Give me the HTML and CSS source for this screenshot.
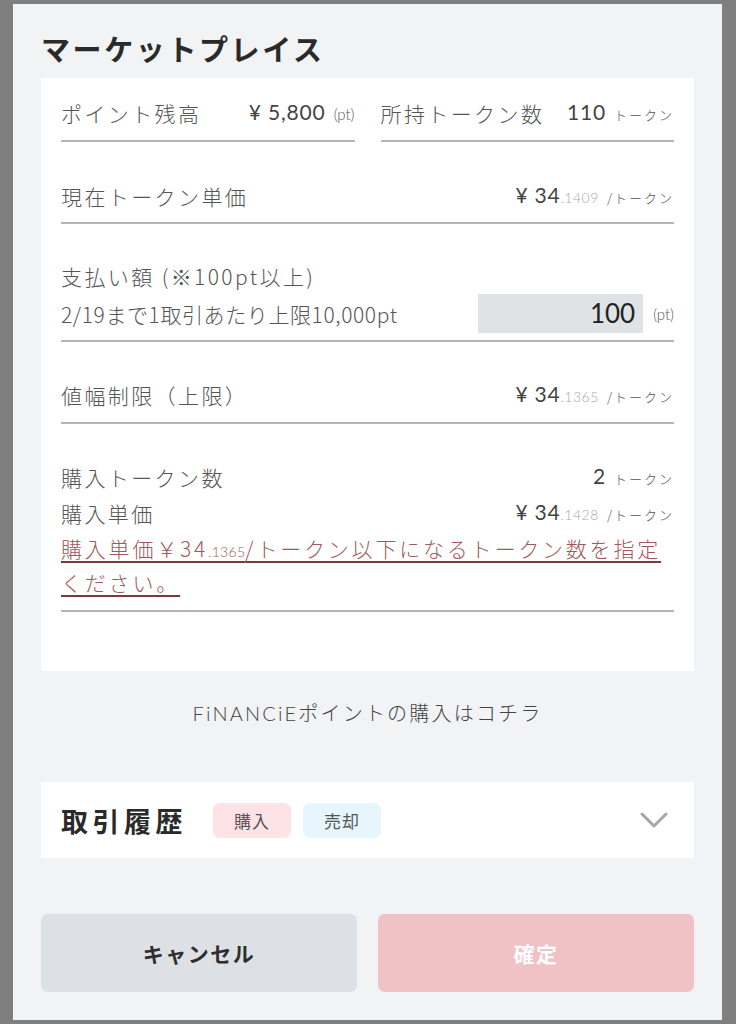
FILE: index.html
```html
<!DOCTYPE html>
<html lang="ja">
<head>
<meta charset="utf-8">
<title>マーケットプレイス</title>
<link rel="stylesheet" href="styles.css">
</head>
<body>
<div class="panel">
  <h1 class="title">マーケットプレイス</h1>
  <div class="card">
    <div class="row row-split">
      <div class="col">
        <span class="label">ポイント残高</span>
        <span class="value"><span class="num">¥ 5,800</span> <span class="unit">(pt)</span></span>
      </div>
      <div class="col">
        <span class="label">所持トークン数</span>
        <span class="value"><span class="num">110</span> <span class="unit unit-jp">トークン</span></span>
      </div>
    </div>
    <div class="row row-price">
      <span class="label">現在トークン単価</span>
      <span class="value"><span class="num">¥ 34</span><span class="dec">.1409</span> <span class="unit unit-jp">/トークン</span></span>
    </div>
    <div class="row row-pay">
      <div class="label line1">支払い額 (※100pt以上)</div>
      <div class="pay-line">
        <span class="label">2/19まで1取引あたり上限10,000pt</span>
        <span class="pay-input-wrap"><span class="pay-input">100</span><span class="unit">(pt)</span></span>
      </div>
    </div>
    <div class="row row-limit">
      <span class="label">値幅制限（上限）</span>
      <span class="value"><span class="num">¥ 34</span><span class="dec">.1365</span> <span class="unit unit-jp">/トークン</span></span>
    </div>
    <div class="row row-buy">
      <div class="buy-line">
        <span class="label">購入トークン数</span>
        <span class="value"><span class="num">2</span> <span class="unit unit-jp">トークン</span></span>
      </div>
      <div class="buy-line">
        <span class="label">購入単価</span>
        <span class="value"><span class="num">¥ 34</span><span class="dec">.1428</span> <span class="unit unit-jp">/トークン</span></span>
      </div>
      <p class="warn">購入単価￥34<span class="warn-dec">.1365</span>/トークン以下になるトークン数を指定ください。</p>
    </div>
  </div>
  <div class="link">FiNANCiEポイントの購入はコチラ</div>
  <div class="history">
    <span class="history-title">取引履歴</span>
    <span class="badge badge-buy">購入</span>
    <span class="badge badge-sell">売却</span>
    <svg class="chevron" width="28" height="18" viewBox="0 0 28 18"><path d="M2 3 L14 15 L26 3" fill="none" stroke="#a6a6a6" stroke-width="3" stroke-linecap="round" stroke-linejoin="round"/></svg>
  </div>
  <div class="actions">
    <button class="btn btn-cancel">キャンセル</button>
    <button class="btn btn-confirm">確定</button>
  </div>
</div>
</body>
</html>
```

FILE: styles.css
```css
* { box-sizing: border-box; }
html, body { margin: 0; padding: 0; }
body {
  background: #7f7f7f;
  font-family: "Lato", "Noto Sans CJK JP", sans-serif;
  color: #555;
  height: 1024px;
  overflow: hidden;
}
.panel {
  margin: 4px 0 0 13px;
  width: 709px;
  height: 1016px;
  background: #f2f3f5;
  padding: 24px 28px 28px;
  display: flex;
  flex-direction: column;
}
.title {
  margin: 0 0 10px;
  height: 40px;
  font-family: "Noto Sans CJK JP", sans-serif;
  font-size: 29px;
  line-height: 40px;
  font-weight: 700;
  letter-spacing: 2.6px;
  color: #2a2a2a;
}
.card {
  background: #fff;
  padding: 0 20px 59px;
  flex: none;
}
.row {
  border-bottom: 2px solid #b5b5b5;
  line-height: 30px;
}
.label {
  font-family: "Noto Sans CJK JP", sans-serif;
  font-size: 21px;
  font-weight: 300;
  letter-spacing: 2.4px;
  color: #555;
}
.value { white-space: nowrap; color: #444; line-height: 30px; }
.num {
  font-family: "Lato", "Noto Sans CJK JP", sans-serif;
  font-size: 21px;
  font-weight: 400;
  letter-spacing: 0.8px;
  color: #444;
}
.dec {
  font-size: 14px;
  font-weight: 300;
  color: #aaa;
  letter-spacing: 0.5px;
}
.unit {
  font-size: 15px;
  font-weight: 300;
  color: #555;
  margin-left: 4px;
}
.unit-jp {
  font-family: "Noto Sans CJK JP", sans-serif;
  font-size: 13px;
  letter-spacing: 2px;
}
.row-split {
  border-bottom: none;
  display: flex;
  gap: 26px;
  height: 64px;
}
.col {
  flex: 1;
  height: 64px;
  display: flex;
  justify-content: space-between;
  align-items: center;
  padding: 20px 0 12px;
  border-bottom: 2px solid #b5b5b5;
}
.row-price, .row-limit {
  display: flex;
  justify-content: space-between;
  align-items: center;
  height: 82px;
}
.row-price { padding: 39px 0 11px; }
.row-limit { padding: 38px 0 12px; }
.row-pay { padding: 35px 0 7px; height: 118px; }
.line1 { height: 35px; line-height: 35px; }
.pay-line {
  display: flex;
  justify-content: space-between;
  align-items: center;
  height: 39px;
}
.pay-line .label { letter-spacing: 0.6px; }
.pay-input-wrap { display: flex; align-items: center; }
.pay-input {
  width: 165px;
  height: 39px;
  background: #e0e3e6;
  text-align: right;
  padding-right: 8px;
  font-size: 26px;
  font-weight: 400;
  line-height: 39px;
  color: #222;
}
.pay-input-wrap .unit { margin-left: 10px; }
.row-buy { padding: 35px 0 15px; height: 188px; }
.buy-line {
  display: flex;
  justify-content: space-between;
  align-items: center;
  height: 36px;
}
.warn {
  margin: 2px 0 0;
  height: 62px;
  font-family: "Noto Sans CJK JP", sans-serif;
  font-size: 21px;
  font-weight: 300;
  line-height: 31px;
  letter-spacing: 2.8px;
  color: #a2595a;
  text-decoration: underline;
  text-decoration-color: #7a3a3b;
  text-decoration-thickness: 2px;
  text-underline-offset: 4px;
}
.warn-dec { font-family: "Lato", sans-serif; font-size: 14px; letter-spacing: 0.3px; }
.link {
  text-align: center;
  height: 111px;
  font-family: "Lato", "Noto Sans CJK JP", sans-serif;
  font-size: 20px;
  font-weight: 300;
  letter-spacing: 2.2px;
  line-height: 30px;
  color: #444;
  padding: 27px 0 54px;
}
.history {
  background: #fff;
  height: 76px;
  display: flex;
  align-items: center;
  padding: 0 26px 0 20px;
}
.history-title {
  font-family: "Noto Sans CJK JP", sans-serif;
  font-size: 27px;
  font-weight: 700;
  letter-spacing: 4.5px;
  color: #2a2a2a;
  margin-right: 26px;
}
.badge {
  width: 78px;
  height: 35px;
  border-radius: 7px;
  display: flex;
  align-items: center;
  justify-content: center;
  font-family: "Noto Sans CJK JP", sans-serif;
  font-size: 17px;
  letter-spacing: 1px;
  color: #555;
}
.badge-buy { background: #fde3e6; margin-right: 12px; }
.badge-sell { background: #e7f6fd; }
.chevron { margin-left: auto; }
.actions {
  margin-top: 56px;
  display: flex;
  gap: 21px;
}
.btn {
  flex: 1;
  height: 78px;
  border: none;
  border-radius: 7px;
  font-family: "Noto Sans CJK JP", sans-serif;
  font-size: 21px;
  font-weight: 700;
  letter-spacing: 1.5px;
}
.btn-cancel { background: #dde1e5; color: #2e2e2e; }
.btn-confirm { background: #f0c2c5; color: #fff; }
```
